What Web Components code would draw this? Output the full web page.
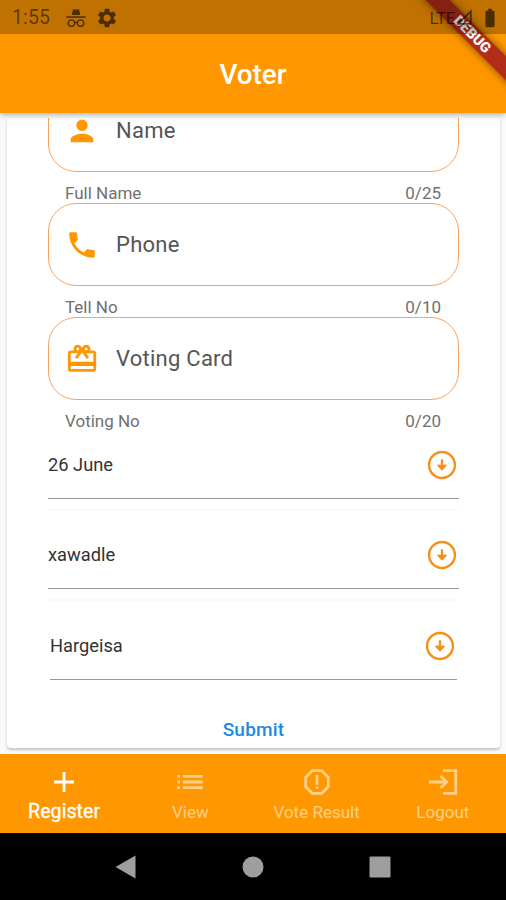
<!DOCTYPE html>
<html lang="en">
<head>
<meta charset="utf-8">
<title>Voter</title>
<style>
  body {
    margin: 0;
    background: #fafafa;
    font-family: Roboto, "Liberation Sans", sans-serif;
  }
</style>
</head>
<body>
<voter-app></voter-app>

<script>
const ICONS = {
  person: '<path d="M12 12c2.21 0 4-1.79 4-4s-1.79-4-4-4-4 1.79-4 4 1.79 4 4 4zm0 2c-2.67 0-8 1.34-8 4v2h16v-2c0-2.66-5.33-4-8-4z"/>',
  phone: '<path d="M6.62 10.79c1.44 2.83 3.76 5.14 6.59 6.59l2.2-2.2c.27-.27.67-.36 1.02-.24 1.12.37 2.33.57 3.57.57.55 0 1 .45 1 1V20c0 .55-.45 1-1 1-9.39 0-17-7.61-17-17 0-.55.45-1 1-1h3.5c.55 0 1 .45 1 1 0 1.25.2 2.45.57 3.57.11.35.03.74-.25 1.02l-2.2 2.2z"/>',
  gift: '<path d="M20 6h-2.18c.11-.31.18-.65.18-1 0-1.66-1.34-3-3-3-1.05 0-1.96.54-2.5 1.35l-.5.67-.5-.68C10.96 2.54 10.05 2 9 2 7.34 2 6 3.34 6 5c0 .35.07.69.18 1H4c-1.11 0-1.99.89-1.99 2L2 19c0 1.11.89 2 2 2h16c1.11 0 2-.89 2-2V8c0-1.11-.89-2-2-2zm-5-2c.55 0 1 .45 1 1s-.45 1-1 1-1-.45-1-1 .45-1 1-1zM9 4c.55 0 1 .45 1 1s-.45 1-1 1-1-.45-1-1 .45-1 1-1zm11 15H4v-2h16v2zm0-5H4V8h5.08L7 10.83 8.62 12 11 8.76l1-1.36 1 1.36L15.38 12 17 10.83 14.92 8H20v6z"/>',
  down: '<path d="M12 3.700c4.600 0 8.300 3.700 8.300 8.300s-3.700 8.300-8.300 8.300-8.300-3.700-8.300-8.300 3.700-8.300 8.300-8.300m0-1.700C6.480 2 2 6.480 2 12s4.480 10 10 10 10-4.480 10-10S17.520 2 12 2zm.8 9.900V8h-1.600v3.900l-2-.2-.7.700L12 16l3.500-3.600-.7-.7z"/>',
  add: '<path d="M19 13h-6v6h-2v-6H5v-2h6V5h2v6h6z"/>',
  list: '<path d="M3 13h2v-2H3v2zm0 4h2v-2H3v2zm0-8h2V7H3v2zm4 4h14v-2H7v2zm0 4h14v-2H7v2zM7 7v2h14V7H7z"/>',
  report: '<path d="M15.73 3H8.27L3 8.27v7.46L8.27 21h7.46L21 15.73V8.27L15.73 3zM19 14.9L14.9 19H9.1L5 14.9V9.1L9.1 5h5.8L19 9.1v5.8z"/><circle cx="12" cy="16" r="1"/><path d="M11 7h2v7h-2z"/>',
  login: '<path d="M11 7L9.6 8.4l2.6 2.6H2v2h10.2l-2.6 2.6L11 17l5-5-5-5zM20 19h-8v2h10V3H12v2h8v14z"/>',
  settings: '<path d="M19.43 12.98c.04-.32.07-.64.07-.98s-.03-.66-.07-.98l2.11-1.65c.19-.15.24-.42.12-.64l-2-3.46c-.12-.22-.39-.3-.61-.22l-2.49 1c-.52-.4-1.08-.73-1.69-.98l-.38-2.65C14.46 2.18 14.25 2 14 2h-4c-.25 0-.46.18-.49.42l-.38 2.65c-.61.25-1.17.59-1.69.98l-2.49-1c-.23-.09-.49 0-.61.22l-2 3.46c-.13.22-.07.49.12.64l2.11 1.65c-.04.32-.07.65-.07.98s.03.66.07.98l-2.11 1.65c-.19.15-.24.42-.12.64l2 3.46c.12.22.39.3.61.22l2.49-1c.52.4 1.08.73 1.69.98l.38 2.65c.03.24.24.42.49.42h4c.25 0 .46-.18.49-.42l.38-2.65c.61-.25 1.17-.59 1.69-.98l2.49 1c.23.09.49 0 .61-.22l2-3.46c.12-.22.07-.49-.12-.64l-2.11-1.65zM12 15.9c-2.15 0-3.9-1.75-3.9-3.9s1.75-3.9 3.9-3.9 3.9 1.75 3.9 3.9-1.75 3.9-3.9 3.9z"/>',
  incognito: '<path d="M7.200 8.800L8.600 3.200c.2-.7.8-1 1.500-.8l1.900.5 1.900-.5c.7-.2 1.300.1 1.500.8l1.400 5.600zM1.500 10h21v1.600h-21z"/><g fill="none" stroke="currentColor" stroke-width="1.500"><circle cx="7" cy="17.500" r="3.500"/><circle cx="17" cy="17.500" r="3.500"/><path d="M10.500 17c1-.7 2-.7 3 0"/></g>',
  signal: '<path d="M4 20L20 4v16z" fill="none" stroke="currentColor" stroke-width="2"/>',
  battery: '<path d="M15.670 4H14V2h-4v2H8.330C7.600 4 7 4.600 7 5.330v15.330C7 21.400 7.600 22 8.330 22h7.330c.74 0 1.340-.6 1.340-1.330V5.330C17 4.600 16.400 4 15.670 4z"/>',
  back: '<path d="M21.500.5v23L1.500 12z"/>',
  home: '<circle cx="12" cy="12" r="10.500"/>',
  recent: '<rect x="1.500" y="1.500" width="21" height="21" rx="1.200"/>'
};

class MdIcon extends HTMLElement {
  constructor() {
    super();
    this.attachShadow({ mode: "open" });
  }

  connectedCallback() {
    this.shadowRoot.innerHTML = `
      <style>
        :host {
          display: block;
          flex: none;
          width: var(--icon-size, 34px);
          height: var(--icon-size, 34px);
        }
        svg {
          display: block;
          width: 100%;
          height: 100%;
          fill: currentColor;
        }
      </style>
      <svg viewBox="0 0 24 24">${ICONS[this.getAttribute("name")]}</svg>
    `;
  }
}

class StatusBar extends HTMLElement {
  constructor() {
    super();
    this.attachShadow({ mode: "open" }).innerHTML = `
      <style>
        :host {
          display: flex;
          align-items: center;
          justify-content: space-between;
          box-sizing: border-box;
          position: relative;
          z-index: 2;
          height: 34px;
          padding: 1px 5px 0 12px;
          background: rgba(0, 0, 0, 0.25);
          color: rgba(0, 0, 0, 0.6);
        }
        div {
          display: flex;
          align-items: center;
        }
        .time {
          width: 53px;
          font-size: 19.5px;
          letter-spacing: 0.1px;
          color: rgba(0, 0, 0, 0.52);
        }
        .net {
          font-size: 17px;
          letter-spacing: -0.4px;
        }
        .left { --icon-size: 22px; gap: 9px; }
        .left .time { margin-right: -9px; }
        .right .signal { --icon-size: 19px; }
        .right .battery { --icon-size: 22px; margin-left: 5px; }
      </style>
      <div class="left">
        <span class="time">1:55</span>
        <md-icon name="incognito"></md-icon>
        <md-icon name="settings"></md-icon>
      </div>
      <div class="right">
        <span class="net">LTE</span>
        <md-icon class="signal" name="signal"></md-icon>
        <md-icon class="battery" name="battery"></md-icon>
      </div>
    `;
  }
}

class DebugBanner extends HTMLElement {
  constructor() {
    super();
    this.attachShadow({ mode: "open" }).innerHTML = `
      <style>
        :host {
          display: block;
          position: absolute;
          top: 0;
          right: 0;
          z-index: 1;
          width: 100px;
          height: 100px;
          overflow: hidden;
        }
        span {
          position: absolute;
          top: 39.5px;
          left: 30px;
          width: 140px;
          height: 17px;
          transform-origin: 70px -39.5px;
          transform: rotate(45deg);
          background: rgba(166, 30, 28, 0.88);
          box-shadow: 0 0 8px rgba(0, 0, 0, 0.5);
          color: #fff;
          font-size: 14.3px;
          font-weight: 900;
          line-height: 17px;
          text-align: center;
        }
      </style>
      <span>DEBUG</span>
    `;
  }
}

class AppHeader extends HTMLElement {
  constructor() {
    super();
    this.attachShadow({ mode: "open" }).innerHTML = `
      <style>
        :host {
          display: block;
          position: relative;
          z-index: 1;
          height: 113px;
          background: #ff9800;
          box-shadow: 0 2px 6px rgba(0, 0, 0, 0.28);
        }
        h1 {
          margin: 0;
          padding-top: 2px;
          color: #fff;
          font-size: 27.8px;
          font-weight: 500;
          line-height: 78px;
          text-align: center;
        }
      </style>
      <status-bar></status-bar>
      <h1><slot></slot></h1>
      <debug-banner></debug-banner>
    `;
  }
}

class TextField extends HTMLElement {
  constructor() {
    super();
    this.attachShadow({ mode: "open" });
  }

  connectedCallback() {
    this.shadowRoot.innerHTML = `
      <style>
        :host {
          display: block;
          height: 114px;
        }
        .box {
          display: flex;
          align-items: center;
          gap: 17px;
          box-sizing: border-box;
          height: 83px;
          padding: 0 16px;
          border: 1.5px solid #fba35c;
          border-radius: 28px;
          color: #ff9800;
        }
        .label {
          color: #555;
          font-size: 22px;
          letter-spacing: 0.25px;
        }
        .helper {
          display: flex;
          justify-content: space-between;
          padding: 10px 18px 0 17px;
          color: #707070;
          font-size: 17px;
          line-height: 22px;
        }
      </style>
      <div class="box">
        <md-icon name="${this.getAttribute("icon")}"></md-icon>
        <span class="label">${this.getAttribute("label")}</span>
      </div>
      <div class="helper">
        <span>${this.getAttribute("helper")}</span>
        <span>0/${this.getAttribute("max")}</span>
      </div>
    `;
  }
}

class SelectRow extends HTMLElement {
  constructor() {
    super();
    this.attachShadow({ mode: "open" }).innerHTML = `
      <style>
        :host {
          display: flex;
          align-items: center;
          justify-content: space-between;
          box-sizing: border-box;
          height: 67px;
          border-bottom: 1px solid #999;
          color: #333;
          font-size: 18.3px;
        }
        span {
          padding-bottom: 2px;
        }
        md-icon {
          color: #f7901a;
        }
      </style>
      <span><slot></slot></span>
      <md-icon name="down"></md-icon>
    `;
  }
}

class RegisterForm extends HTMLElement {
  constructor() {
    super();
    this.attachShadow({ mode: "open" }).innerHTML = `
      <style>
        :host {
          display: block;
          box-sizing: border-box;
          height: 641px;
          padding: 5px 6px 6px 7px;
        }
        .card {
          box-sizing: border-box;
          height: 630px;
          border-radius: 4px;
          background: #fff;
          box-shadow: 0 2px 3px rgba(0, 0, 0, 0.22);
        }
        .view {
          height: 100%;
          padding: 0 41px;
          overflow: hidden;
        }
        /* the list is scrolled a little, the first field is cut off */
        .list {
          margin-top: -29px;
        }
        hr {
          height: 2px;
          margin: 10px 0 11px;
          border: 0;
          background: #fafafa;
        }
        .first {
          margin-top: 1px;
        }
        .last {
          margin: 0 2px;
        }
        button {
          display: block;
          margin: 30px auto 0;
          padding: 0;
          border: 0;
          background: none;
          color: #1e88e5;
          font: 500 19px/40px Roboto, "Liberation Sans", sans-serif;
          letter-spacing: 0.2px;
        }
      </style>
      <div class="card">
        <div class="view">
          <div class="list">
            <text-field icon="person" label="Name" helper="Full Name" max="25"></text-field>
            <text-field icon="phone" label="Phone" helper="Tell No" max="10"></text-field>
            <text-field icon="gift" label="Voting Card" helper="Voting No" max="20"></text-field>
            <select-row class="first">26 June</select-row>
            <hr>
            <select-row>xawadle</select-row>
            <hr style="margin-bottom: 12px">
            <select-row class="last">Hargeisa</select-row>
            <button>Submit</button>
          </div>
        </div>
      </div>
    `;
  }
}

class NavItem extends HTMLElement {
  constructor() {
    super();
    this.attachShadow({ mode: "open" });
  }

  connectedCallback() {
    this.shadowRoot.innerHTML = `
      <style>
        :host {
          display: flex;
          flex: 1;
          flex-direction: column;
          align-items: center;
          padding-top: 11px;
          color: #ffd08a;
          font-size: 17px;
          line-height: 26px;
        }
        :host([active]) {
          color: #fff;
          font-size: 19.7px;
          line-height: 25px;
          -webkit-text-stroke: 0.3px #fff;
        }
      </style>
      <md-icon name="${this.getAttribute("icon")}"></md-icon>
      <slot></slot>
    `;
  }
}

class BottomNav extends HTMLElement {
  constructor() {
    super();
    this.attachShadow({ mode: "open" }).innerHTML = `
      <style>
        :host {
          display: flex;
          box-sizing: border-box;
          height: 79px;
          padding-left: 1px;
          background: #ff9800;
        }
      </style>
      <nav-item icon="add" active>Register</nav-item>
      <nav-item icon="list">View</nav-item>
      <nav-item icon="report">Vote Result</nav-item>
      <nav-item icon="login">Logout</nav-item>
    `;
  }
}

class SystemBar extends HTMLElement {
  constructor() {
    super();
    this.attachShadow({ mode: "open" }).innerHTML = `
      <style>
        :host {
          display: flex;
          align-items: center;
          justify-content: center;
          gap: 103px;
          height: 67px;
          background: #000;
          color: #9e9e9e;
          --icon-size: 24px;
        }
      </style>
      <md-icon name="back"></md-icon>
      <md-icon name="home"></md-icon>
      <md-icon name="recent"></md-icon>
    `;
  }
}

class VoterApp extends HTMLElement {
  constructor() {
    super();
    this.attachShadow({ mode: "open" }).innerHTML = `
      <style>
        :host {
          display: flex;
          flex-direction: column;
          width: 506px;
          height: 900px;
          overflow: hidden;
        }
      </style>
      <app-header>Voter</app-header>
      <register-form></register-form>
      <bottom-nav></bottom-nav>
      <system-bar></system-bar>
    `;
  }
}

customElements.define("md-icon", MdIcon);
customElements.define("status-bar", StatusBar);
customElements.define("debug-banner", DebugBanner);
customElements.define("app-header", AppHeader);
customElements.define("text-field", TextField);
customElements.define("select-row", SelectRow);
customElements.define("register-form", RegisterForm);
customElements.define("nav-item", NavItem);
customElements.define("bottom-nav", BottomNav);
customElements.define("system-bar", SystemBar);
customElements.define("voter-app", VoterApp);
</script>
</body>
</html>
